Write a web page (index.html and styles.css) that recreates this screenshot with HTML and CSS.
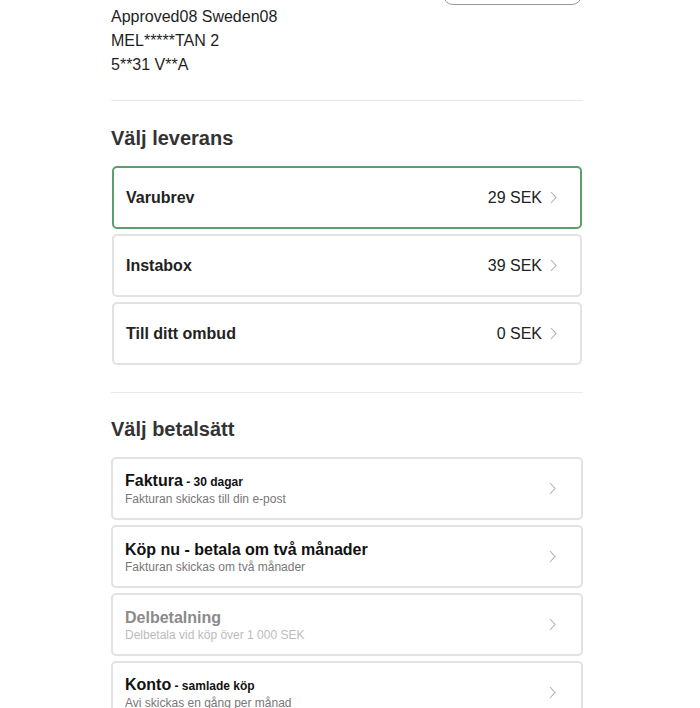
FILE: index.html
```html
<!DOCTYPE html>
<html lang="sv">
<head>
<meta charset="utf-8">
<title>Kassa</title>
<link rel="stylesheet" href="styles.css">
</head>
<body>
<div class="page">
  <div class="head"><button class="btn" type="button"></button></div>
  <div class="address">
    <div>Approved08 Sweden08</div>
    <div>MEL*****TAN 2</div>
    <div>5**31 V**A</div>
  </div>
  <hr class="divider">
  <h2 class="title">Välj leverans</h2>
  <div class="list">
    <div class="ship selected"><span class="ship-name">Varubrev</span><span class="price">29 SEK</span><svg class="chev" viewBox="0 0 7 13" width="7" height="13"><path d="M1 1l5 5.5-5 5.5" fill="none" stroke="#b0b0b0" stroke-width="1.1"/></svg></div>
    <div class="ship"><span class="ship-name">Instabox</span><span class="price">39 SEK</span><svg class="chev" viewBox="0 0 7 13" width="7" height="13"><path d="M1 1l5 5.5-5 5.5" fill="none" stroke="#b0b0b0" stroke-width="1.1"/></svg></div>
    <div class="ship"><span class="ship-name">Till ditt ombud</span><span class="price">0 SEK</span><svg class="chev" viewBox="0 0 7 13" width="7" height="13"><path d="M1 1l5 5.5-5 5.5" fill="none" stroke="#b0b0b0" stroke-width="1.1"/></svg></div>
  </div>
  <hr class="divider d2">
  <h2 class="title t2">Välj betalsätt</h2>
  <div class="list">
    <div class="pay">
      <div class="pay-text">
        <div class="pay-title">Faktura<span class="small"> - 30 dagar</span></div>
        <div class="pay-sub">Fakturan skickas till din e-post</div>
      </div>
      <svg class="chev" viewBox="0 0 7 13" width="7" height="13"><path d="M1 1l5 5.5-5 5.5" fill="none" stroke="#b0b0b0" stroke-width="1.1"/></svg>
    </div>
    <div class="pay">
      <div class="pay-text">
        <div class="pay-title">Köp nu - betala om två månader</div>
        <div class="pay-sub">Fakturan skickas om två månader</div>
      </div>
      <svg class="chev" viewBox="0 0 7 13" width="7" height="13"><path d="M1 1l5 5.5-5 5.5" fill="none" stroke="#b0b0b0" stroke-width="1.1"/></svg>
    </div>
    <div class="pay disabled">
      <div class="pay-text">
        <div class="pay-title">Delbetalning</div>
        <div class="pay-sub">Delbetala vid köp över 1 000 SEK</div>
      </div>
      <svg class="chev" viewBox="0 0 7 13" width="7" height="13"><path d="M1 1l5 5.5-5 5.5" fill="none" stroke="#b0b0b0" stroke-width="1.1"/></svg>
    </div>
    <div class="pay">
      <div class="pay-text">
        <div class="pay-title">Konto<span class="small"> - samlade köp</span></div>
        <div class="pay-sub">Avi skickas en gång per månad</div>
      </div>
      <svg class="chev" viewBox="0 0 7 13" width="7" height="13"><path d="M1 1l5 5.5-5 5.5" fill="none" stroke="#b0b0b0" stroke-width="1.1"/></svg>
    </div>
  </div>
</div>
</body>
</html>
```
FILE: styles.css
```css
html, body {
  margin: 0;
  padding: 0;
  background: #fff;
}
body {
  font-family: "Liberation Sans", Arial, sans-serif;
  color: #222;
  overflow: hidden;
}
.page {
  width: 472px;
  margin-left: 111px;
}
.head {
  display: flex;
  justify-content: flex-end;
  margin-top: -35px;
}
.btn {
  width: 139px;
  height: 40px;
  margin-right: 1px;
  border: 1px solid #9a9a9a;
  border-radius: 10px;
  background: #fff;
}
.address {
  font-size: 16px;
  line-height: 24px;
  color: #1e1e1e;
}
.divider {
  border: 0;
  border-top: 1px solid #e9e9e9;
  margin: 23px 0 0;
  height: 0;
}
.d2 {
  margin-top: 27px;
}
.title {
  font-size: 20px;
  line-height: 24px;
  font-weight: bold;
  color: #333;
  margin: 25px 0 16px;
}
.t2 {
  margin-top: 24px;
}
.list {
  display: flex;
  flex-direction: column;
  gap: 5px;
}
.ship {
  display: flex;
  align-items: center;
  height: 63px;
  box-sizing: border-box;
  margin: 0 1px;
  padding: 0 23px 0 12px;
  border: 2px solid #e2e2e2;
  border-radius: 5px;
  font-size: 16px;
}
.ship.selected {
  border-color: #5d9e70;
}
.ship-name {
  font-weight: bold;
  color: #222;
  flex: 1;
}
.price {
  color: #222;
  margin-right: 8px;
}
.chev {
  display: block;
  flex: none;
}
.pay {
  display: flex;
  align-items: center;
  height: 63px;
  box-sizing: border-box;
  padding: 0 25px 0 12px;
  border: 2px solid #e2e2e2;
  border-radius: 5px;
}
.pay-text {
  flex: 1;
}
.pay-title {
  font-size: 16px;
  line-height: 20px;
  font-weight: bold;
  color: #111;
}
.small {
  font-size: 12px;
}
.pay-sub {
  font-size: 12px;
  line-height: 14px;
  color: #777;
}
.disabled .pay-title {
  color: #8a8a8a;
}
.disabled .pay-sub {
  color: #bcbcbc;
}
```
